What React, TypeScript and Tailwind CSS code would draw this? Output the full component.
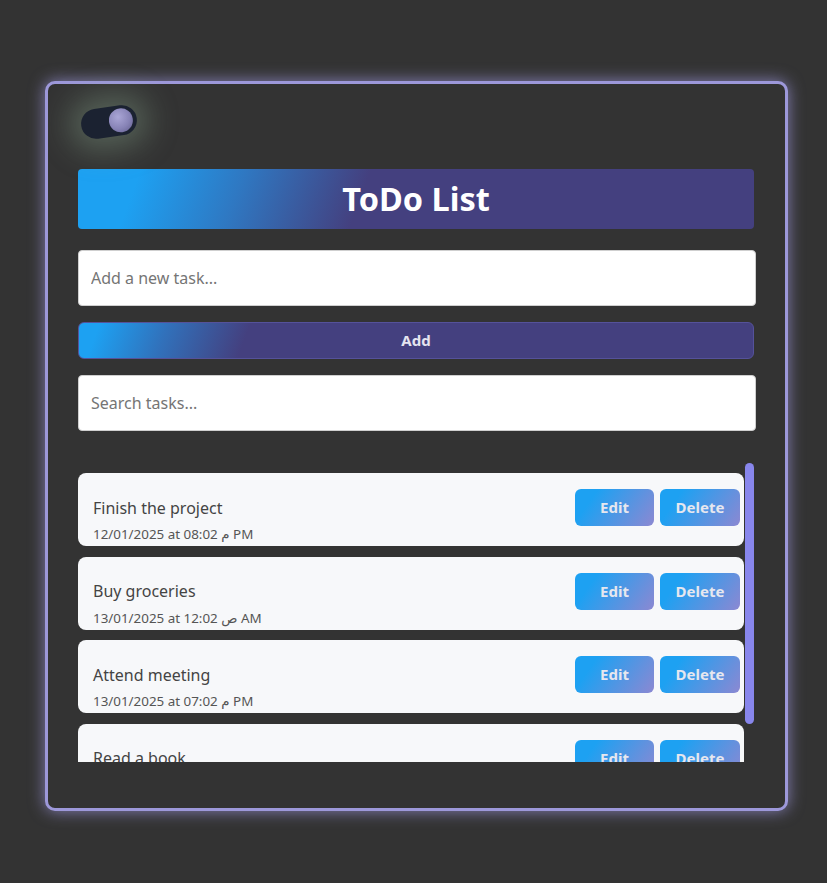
import React from "react";

const tasks = [
  { title: "Finish the project", date: "12/01/2025 at 08:02 م PM" },
  { title: "Buy groceries", date: "13/01/2025 at 12:02 ص AM" },
  { title: "Attend meeting", date: "13/01/2025 at 07:02 م PM" },
  { title: "Read a book", date: "14/01/2025 at 09:02 م PM" },
];

export default function App() {
  return (
    <div
      className="min-h-screen bg-[#333333] pt-[81px] pl-[45px]"
      style={{ fontFamily: '"Noto Sans", "DejaVu Sans", sans-serif' }}
    >
      <div className="w-[743px] h-[730px] rounded-[10px] border-[3px] border-[#9d98da] bg-[#333333] shadow-[0_0_16px_rgba(160,154,225,0.75)] pt-[23px] px-[30px]">
        {/* toggle */}
        <div className="ml-[3px] mb-[32px] w-[56px] h-[30px] rotate-[-8deg] rounded-full bg-[#1b2231] shadow-[0_0_30px_12px_rgba(150,185,155,0.34)] flex items-center justify-end pr-[4px]">
          <div className="w-[24px] h-[24px] rounded-full bg-[radial-gradient(circle_at_40%_35%,#aaa6d6_0%,#8783b6_55%,#5f5b8a_100%)]" />
        </div>

        {/* header */}
        <div className="h-[60px] w-[676px] rounded-[4px] bg-[linear-gradient(110deg,#1da1f2_9%,#2f78c2_24%,#44407f_42%)] flex items-center justify-center mb-[21px]">
          <h1 className="text-[32.5px] font-bold text-white leading-none">ToDo List</h1>
        </div>

        <input
          type="text"
          placeholder="Add a new task..."
          className="block w-[678px] h-[56px] rounded-[4px] border border-[#cfcfcf] bg-white px-[12px] text-[16px] text-[#333] placeholder:text-[#757575] outline-none mb-[16px]"
        />

        <button className="block w-[676px] h-[37px] rounded-[6px] border border-[#55529a] bg-[linear-gradient(110deg,#1da1f2_3%,#3171bb_13%,#44407f_25%)] text-[15px] font-bold text-[#e4e4ef] mb-[16px]">
          Add
        </button>

        <input
          type="text"
          placeholder="Search tasks..."
          className="block w-[678px] h-[56px] rounded-[4px] border border-[#cfcfcf] bg-white px-[12px] text-[16px] text-[#333] placeholder:text-[#757575] outline-none mb-[32px]"
        />

        <div className="flex w-[676px] h-[299px]">
          <ul className="w-[666px] h-[299px] overflow-hidden pt-[10px] flex flex-col gap-[10.5px]">
            {tasks.map((t) => (
              <li
                key={t.title}
                className="shrink-0 h-[73px] rounded-[8px] bg-[#f7f8fa] pt-[16px] pl-[15px] pr-[4px]"
              >
                <div className="flex items-center justify-between h-[37px]">
                  <span className="text-[16px] text-[#444444]">{t.title}</span>
                  <div className="flex gap-[6px]">
                    <button className="w-[79px] h-[37px] rounded-[6px] bg-[linear-gradient(125deg,#1da1f2_22%,#8c88d2_100%)] text-[15px] font-bold text-[#e6e7ef]">
                      Edit
                    </button>
                    <button className="w-[80px] h-[37px] rounded-[6px] bg-[linear-gradient(125deg,#1da1f2_22%,#8c88d2_100%)] text-[15px] font-bold text-[#e6e7ef]">
                      Delete
                    </button>
                  </div>
                </div>
                <div className="text-[13.4px] leading-[16px] text-[#555555]">{t.date}</div>
              </li>
            ))}
          </ul>
          <div className="w-[10px] h-[299px] pl-[1px]">
            <div className="w-[9px] h-[261px] rounded-full bg-[#8886ec]" />
          </div>
        </div>
      </div>
    </div>
  );
}
